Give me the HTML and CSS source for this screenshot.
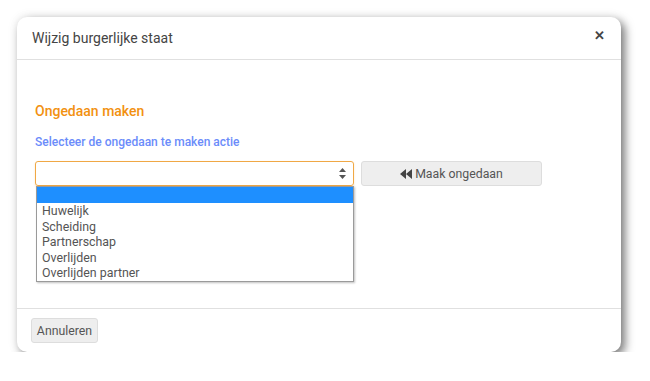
FILE: index.html
```html
<!DOCTYPE html>
<html>
<head>
<meta charset="utf-8">
<link rel="stylesheet" href="styles.css">
</head>
<body>
<div class="modal">
  <div class="modal-header">
    <span class="modal-title">Wijzig burgerlijke staat</span>
    <span class="close">&#x2715;</span>
  </div>
  <div class="modal-body">
    <h4 class="section-title">Ongedaan maken</h4>
    <label class="field-label">Selecteer de ongedaan te maken actie</label>
    <div class="row">
      <div class="select-wrap">
        <div class="select">
          <svg class="arrows" width="7" height="11" viewBox="0 0 7 11"><path d="M3.5 0 L7 4 L0 4 Z M0 7 L7 7 L3.5 11 Z" fill="#555"/></svg>
        </div>
        <ul class="listbox">
          <li class="selected">&nbsp;</li>
          <li>Huwelijk</li>
          <li>Scheiding</li>
          <li>Partnerschap</li>
          <li>Overlijden</li>
          <li>Overlijden partner</li>
        </ul>
      </div>
      <button class="btn btn-undo"><svg width="13" height="10" viewBox="0 0 13 10"><path d="M0 5 L6 0 L6 10 Z M6 5 L12 0 L12 10 Z" fill="#444"/></svg>Maak ongedaan</button>
    </div>
  </div>
  <div class="modal-footer">
    <button class="btn btn-cancel">Annuleren</button>
  </div>
</div>
</body>
</html>
```
FILE: styles.css
```css
html, body {
  margin: 0;
  padding: 0;
  background: #fff;
  font-family: Roboto, "Liberation Sans", sans-serif;
}
.modal {
  margin: 17px 0 0 17px;
  width: 604px;
  height: 335px;
  border-radius: 10px;
  background: #fff;
  box-shadow: 4px 4px 10px rgba(0,0,0,0.5), 0 0 12px rgba(0,0,0,0.08);
  display: flex;
  flex-direction: column;
}
.modal-header {
  height: 42px;
  border-bottom: 1px solid #e0e0e0;
  display: flex;
  align-items: center;
  justify-content: space-between;
  padding: 0 16px 0 15px;
}
.modal-title {
  font-size: 14px;
  color: #444;
}
.close {
  font-size: 12.5px;
  font-weight: bold;
  color: #444;
  margin-top: -6px;
}
.modal-body {
  flex: 1;
  padding: 42px 18px 0 18px;
}
.section-title {
  margin: 0;
  font-size: 14px;
  font-weight: 500;
  color: #f29111;
  line-height: 18px;
}
.field-label {
  display: block;
  margin-top: 14px;
  font-size: 12px;
  font-weight: 500;
  color: #6b8cfa;
  line-height: 16px;
}
.row {
  margin-top: 11px;
  display: flex;
  gap: 7px;
}
.select-wrap {
  position: relative;
  width: 319px;
}
.select {
  height: 23px;
  border: 1px solid #f0a845;
  border-radius: 3px;
  box-shadow: 0 1px 2px rgba(240,168,69,0.3);
  display: flex;
  align-items: center;
  justify-content: flex-end;
  padding-right: 7px;
}
.listbox {
  position: absolute;
  left: 1px;
  top: 25px;
  width: 316px;
  margin: 0;
  padding: 0;
  list-style: none;
  background: #fff;
  border: 1px solid #9a9a9a;
  box-shadow: 1px 1px 2px rgba(0,0,0,0.25);
  font-size: 12.4px;
  color: #555;
}
.listbox li {
  height: 15.5px;
  line-height: 15.5px;
  padding-left: 5px;
}
.listbox li.selected {
  background: #1e8fff;
  height: 16px;
}
.btn {
  font-family: Roboto, "Liberation Sans", sans-serif;
  background: #eee;
  border: 1px solid #ddd;
  border-radius: 3px;
  color: #555;
  height: 25px;
  padding: 0 6px;
}
.btn-undo {
  width: 181px;
  font-size: 12.3px;
  display: flex;
  align-items: center;
  justify-content: center;
  gap: 2px;
}
.modal-footer {
  height: 43px;
  border-top: 1px solid #e0e0e0;
  display: flex;
  align-items: center;
  padding: 0 14px;
}
.btn-cancel {
  font-size: 12.3px;
  width: 67px;
  padding: 0;
}
```
